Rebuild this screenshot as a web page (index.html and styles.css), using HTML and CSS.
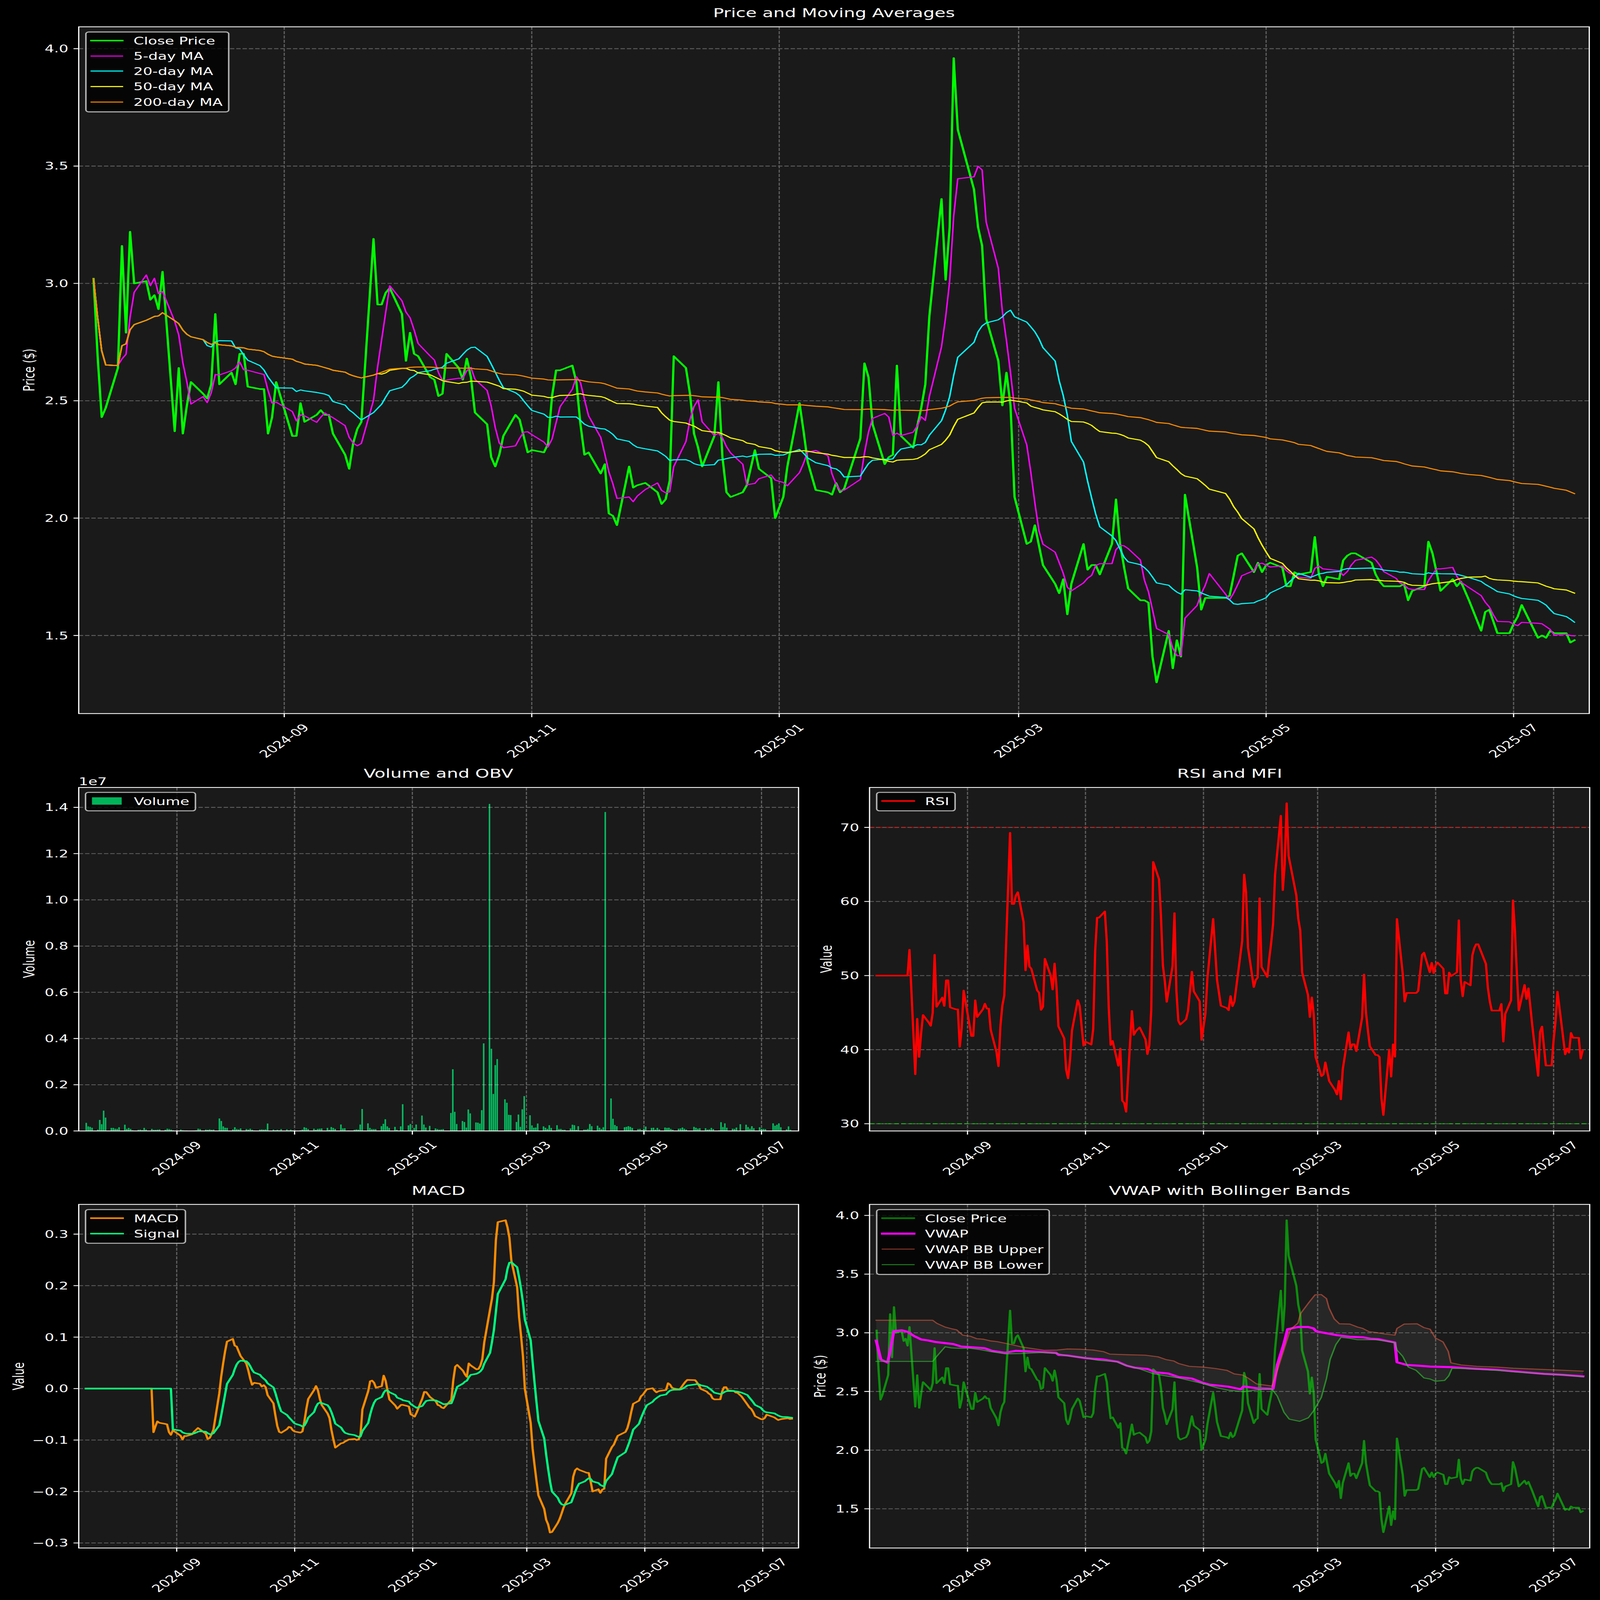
FILE: index.html
```html
<!DOCTYPE html>
<html lang="en">
<head>
<meta charset="utf-8">
<title>Price and Moving Averages</title>
<link rel="stylesheet" href="styles.css">
</head>
<body>
<main class="figure">

<svg class="chart wide" viewBox="0 0 4470 3110" preserveAspectRatio="none" role="img" aria-label="Price and Moving Averages">
  <text class="title" x="2330" y="70">Price and Moving Averages</text>
  <rect class="plot" x="220" y="109" width="4220" height="2793"/>
  <path class="grid" d="M794.1 109V2902M1485.6 109V2902M2177 109V2902M2845.8 109V2902M3537.2 109V2902M4228.6 109V2902M220 198H4440M220 675.3H4440M220 1152.6H4440M220 1629.9H4440M220 2107.2H4440M220 2584.5H4440"/>
  <polyline id="main-close" class="line lime w15"/>
  <polyline id="main-ma5" class="line magenta w10"/>
  <polyline id="main-ma20" class="line cyan w10"/>
  <polyline id="main-ma50" class="line yellow w10"/>
  <polyline id="main-ma200" class="line orange w10"/>
  <rect class="frame" x="220" y="109" width="4220" height="2793"/>
  <path class="tickmark" d="M205.4 198H220M205.4 675.3H220M205.4 1152.6H220M205.4 1629.9H220M205.4 2107.2H220M205.4 2584.5H220M794.1 2902V2916.6M1485.6 2902V2916.6M2177 2902V2916.6M2845.8 2902V2916.6M3537.2 2902V2916.6M4228.6 2902V2916.6"/>
  <g class="tick yt">
    <text x="191" y="213">4.0</text><text x="191" y="690">3.5</text><text x="191" y="1168">3.0</text><text x="191" y="1645">2.5</text><text x="191" y="2122">2.0</text><text x="191" y="2600">1.5</text>
  </g>
  <g class="tick xt">
    <text transform="translate(794.1 3013) rotate(-45)">2024-09</text>
    <text transform="translate(1485.6 3013) rotate(-45)">2024-11</text>
    <text transform="translate(2177 3013) rotate(-45)">2025-01</text>
    <text transform="translate(2845.8 3013) rotate(-45)">2025-03</text>
    <text transform="translate(3537.2 3013) rotate(-45)">2025-05</text>
    <text transform="translate(4228.6 3013) rotate(-45)">2025-07</text>
  </g>
  <text class="label" transform="translate(96 1505) rotate(-90)">Price ($)</text>
  <rect class="legend" x="240" y="130" width="399" height="325" rx="8"/>
  <path class="line lime w15" d="M255 165H342"/>
  <path class="line magenta w10" d="M255 228H342"/>
  <path class="line cyan w10" d="M255 289H342"/>
  <path class="line yellow w10" d="M255 352H342"/>
  <path class="line orange w10" d="M255 415H342"/>
  <g class="tick">
    <text x="373" y="181">Close Price</text><text x="373" y="243">5-day MA</text><text x="373" y="305">20-day MA</text><text x="373" y="367">50-day MA</text><text x="373" y="430">200-day MA</text>
  </g>
</svg>

<svg class="chart" viewBox="0 3110 2250 1705" preserveAspectRatio="none" role="img" aria-label="Volume and OBV">
  <text class="title" x="1225" y="3163">Volume and OBV</text>
  <rect class="plot" x="220" y="3202" width="2011" height="1397"/>
  <path id="volume-bars" class="bars"/>
  <path class="grid" d="M494.3 3202V4599M823 3202V4599M1152 3202V4599M1470.7 3202V4599M1799 3202V4599M2127.5 3202V4599M220 3283H2231M220 3471H2231M220 3659H2231M220 3847H2231M220 4035H2231M220 4223H2231M220 4411H2231"/>
  <rect class="frame" x="220" y="3202" width="2011" height="1397"/>
  <path class="tickmark" d="M205.4 3283H220M205.4 3471H220M205.4 3659H220M205.4 3847H220M205.4 4035H220M205.4 4223H220M205.4 4411H220M205.4 4599H220M494.3 4599V4613.6M823 4599V4613.6M1152 4599V4613.6M1470.7 4599V4613.6M1799 4599V4613.6M2127.5 4599V4613.6"/>
  <g class="tick yt">
    <text x="191" y="3298">1.4</text><text x="191" y="3486">1.2</text><text x="191" y="3674">1.0</text><text x="191" y="3862">0.8</text><text x="191" y="4050">0.6</text><text x="191" y="4238">0.4</text><text x="191" y="4426">0.2</text><text x="191" y="4614">0.0</text>
  </g>
  <g class="tick xt">
    <text transform="translate(494.3 4710) rotate(-45)">2024-09</text>
    <text transform="translate(823 4710) rotate(-45)">2024-11</text>
    <text transform="translate(1152 4710) rotate(-45)">2025-01</text>
    <text transform="translate(1470.7 4710) rotate(-45)">2025-03</text>
    <text transform="translate(1799 4710) rotate(-45)">2025-05</text>
    <text transform="translate(2127.5 4710) rotate(-45)">2025-07</text>
  </g>
  <text class="tick" x="220" y="3192">1e7</text>
  <text class="label" transform="translate(96 3900) rotate(-90)">Volume</text>
  <rect class="legend" x="239" y="3222" width="307" height="75" rx="8"/>
  <rect class="swatch" x="257" y="3242" width="83" height="30"/>
  <text class="tick" x="374" y="3273">Volume</text>
</svg>

<svg class="chart" viewBox="2250 3110 2220 1705" preserveAspectRatio="none" role="img" aria-label="RSI and MFI">
  <text class="title" x="3435" y="3163">RSI and MFI</text>
  <rect class="plot" x="2429" y="3202" width="2012" height="1397"/>
  <path class="grid" d="M2702.7 3202V4599M3032.3 3202V4599M3362 3202V4599M3680.8 3202V4599M4010.5 3202V4599M4340.1 3202V4599M2429 3364.4H4441M2429 3665.7H4441M2429 3967H4441M2429 4268.3H4441M2429 4569.6H4441"/>
  <path class="hline over" d="M2429 3364.4H4441"/>
  <path class="hline under" d="M2429 4569.6H4441"/>
  <polyline id="rsi-line" class="line red w15"/>
  <rect class="frame" x="2429" y="3202" width="2012" height="1397"/>
  <path class="tickmark" d="M2414.4 3364.4H2429M2414.4 3665.7H2429M2414.4 3967H2429M2414.4 4268.3H2429M2414.4 4569.6H2429M2702.7 4599V4613.6M3032.3 4599V4613.6M3362 4599V4613.6M3680.8 4599V4613.6M4010.5 4599V4613.6M4340.1 4599V4613.6"/>
  <g class="tick yt">
    <text x="2400" y="3380">70</text><text x="2400" y="3681">60</text><text x="2400" y="3982">50</text><text x="2400" y="4284">40</text><text x="2400" y="4585">30</text>
  </g>
  <g class="tick xt">
    <text transform="translate(2702.7 4710) rotate(-45)">2024-09</text>
    <text transform="translate(3032.3 4710) rotate(-45)">2024-11</text>
    <text transform="translate(3362 4710) rotate(-45)">2025-01</text>
    <text transform="translate(3680.8 4710) rotate(-45)">2025-03</text>
    <text transform="translate(4010.5 4710) rotate(-45)">2025-05</text>
    <text transform="translate(4340.1 4710) rotate(-45)">2025-07</text>
  </g>
  <text class="label" transform="translate(2323 3900) rotate(-90)">Value</text>
  <rect class="legend" x="2449" y="3222" width="219" height="75" rx="8"/>
  <path class="line red w15" d="M2465 3257H2553"/>
  <text class="tick" x="2584" y="3273">RSI</text>
</svg>

<svg class="chart" viewBox="0 4815 2250 1692" preserveAspectRatio="none" role="img" aria-label="MACD">
  <text class="title" x="1225" y="4859">MACD</text>
  <rect class="plot" x="220" y="4898" width="2011" height="1397.5"/>
  <path class="grid" d="M493.7 4898V6295.5M823.3 4898V6295.5M1153 4898V6295.5M1471.8 4898V6295.5M1801.5 4898V6295.5M2131 4898V6295.5M220 5019H2231M220 5228.4H2231M220 5437.7H2231M220 5647H2231M220 5856.3H2231M220 6065.6H2231M220 6274.9H2231"/>
  <polyline id="macd-line" class="line orange w15"/>
  <polyline id="macd-signal" class="line spring w15"/>
  <rect class="frame" x="220" y="4898" width="2011" height="1397.5"/>
  <path class="tickmark" d="M205.4 5019H220M205.4 5228.4H220M205.4 5437.7H220M205.4 5647H220M205.4 5856.3H220M205.4 6065.6H220M205.4 6274.9H220M493.7 6295.5V6310.1M823.3 6295.5V6310.1M1153 6295.5V6310.1M1471.8 6295.5V6310.1M1801.5 6295.5V6310.1M2131 6295.5V6310.1"/>
  <g class="tick yt">
    <text x="191" y="5034">0.3</text><text x="191" y="5244">0.2</text><text x="191" y="5453">0.1</text><text x="191" y="5662">0.0</text><text x="191" y="5871">−0.1</text><text x="191" y="6081">−0.2</text><text x="191" y="6290">−0.3</text>
  </g>
  <g class="tick xt">
    <text transform="translate(493.7 6406) rotate(-45)">2024-09</text>
    <text transform="translate(823.3 6406) rotate(-45)">2024-11</text>
    <text transform="translate(1153 6406) rotate(-45)">2025-01</text>
    <text transform="translate(1471.8 6406) rotate(-45)">2025-03</text>
    <text transform="translate(1801.5 6406) rotate(-45)">2025-05</text>
    <text transform="translate(2131 6406) rotate(-45)">2025-07</text>
  </g>
  <text class="label" transform="translate(67 5597) rotate(-90)">Value</text>
  <rect class="legend" x="239" y="4919" width="279" height="137" rx="8"/>
  <path class="line orange w15" d="M255 4954H343"/>
  <path class="line spring w15" d="M255 5017H343"/>
  <g class="tick">
    <text x="374" y="4970">MACD</text><text x="374" y="5033">Signal</text>
  </g>
</svg>

<svg class="chart" viewBox="2250 4815 2220 1692" preserveAspectRatio="none" role="img" aria-label="VWAP with Bollinger Bands">
  <text class="title" x="3435" y="4859">VWAP with Bollinger Bands</text>
  <rect class="plot" x="2429" y="4898" width="2012" height="1397.5"/>
  <path class="grid" d="M2702.7 4898V6295.5M3032.3 4898V6295.5M3362 4898V6295.5M3680.8 4898V6295.5M4010.5 4898V6295.5M4340.1 4898V6295.5M2429 4943H4441M2429 5181.6H4441M2429 5420.2H4441M2429 5658.8H4441M2429 5897.4H4441M2429 6136H4441"/>
  <polygon id="vwap-band" class="band"/>
  <polyline id="vwap-close" class="line dimgreen w15"/>
  <polyline id="vwap-line" class="line magenta w20"/>
  <polyline id="vwap-upper" class="line bb-up w10"/>
  <polyline id="vwap-lower" class="line bb-low w10"/>
  <rect class="frame" x="2429" y="4898" width="2012" height="1397.5"/>
  <path class="tickmark" d="M2414.4 4943H2429M2414.4 5181.6H2429M2414.4 5420.2H2429M2414.4 5658.8H2429M2414.4 5897.4H2429M2414.4 6136H2429M2702.7 6295.5V6310.1M3032.3 6295.5V6310.1M3362 6295.5V6310.1M3680.8 6295.5V6310.1M4010.5 6295.5V6310.1M4340.1 6295.5V6310.1"/>
  <g class="tick yt">
    <text x="2400" y="4958">4.0</text><text x="2400" y="5197">3.5</text><text x="2400" y="5435">3.0</text><text x="2400" y="5674">2.5</text><text x="2400" y="5913">2.0</text><text x="2400" y="6151">1.5</text>
  </g>
  <g class="tick xt">
    <text transform="translate(2702.7 6406) rotate(-45)">2024-09</text>
    <text transform="translate(3032.3 6406) rotate(-45)">2024-11</text>
    <text transform="translate(3362 6406) rotate(-45)">2025-01</text>
    <text transform="translate(3680.8 6406) rotate(-45)">2025-03</text>
    <text transform="translate(4010.5 6406) rotate(-45)">2025-05</text>
    <text transform="translate(4340.1 6406) rotate(-45)">2025-07</text>
  </g>
  <text class="label" transform="translate(2306 5597) rotate(-90)">Price ($)</text>
  <rect class="legend" x="2449" y="4919" width="482" height="264" rx="8"/>
  <path class="line dimgreen w15" d="M2465 4954H2553"/>
  <path class="line magenta w20" d="M2465 5017H2553"/>
  <path class="line bb-up w10" d="M2465 5080H2553"/>
  <path class="line bb-low w10" d="M2465 5143H2553"/>
  <g class="tick">
    <text x="2584" y="4970">Close Price</text><text x="2584" y="5033">VWAP</text><text x="2584" y="5096">VWAP BB Upper</text><text x="2584" y="5159">VWAP BB Lower</text>
  </g>
</svg>

</main>
<script src="script.js"></script>
</body>
</html>
```
FILE: styles.css
```css
html, body { margin: 0; padding: 0; background: #000; overflow: hidden; }
.figure {
  display: grid;
  grid-template-columns: 2250fr 2220fr;
  grid-template-rows: 3110fr 1705fr 1692fr;
  width: 100vw;
  height: 100vh;
  background: #000;
  overflow: hidden;
}
.chart { display: block; width: 100%; height: 100%; min-width: 0; min-height: 0; overflow: visible; }
.wide { grid-column: 1 / 3; }

text { font-family: "DejaVu Sans", sans-serif; fill: #fff; }
.title { font-size: 50px; text-anchor: middle; }
.tick { font-size: 41.67px; fill: #fff; }
.yt { text-anchor: end; }
.xt { text-anchor: middle; dominant-baseline: central; }
.label { font-size: 41.67px; text-anchor: middle; }

.plot { fill: #1a1a1a; }
.frame { fill: none; stroke: #fff; stroke-width: 3.33px; }
.grid { fill: none; stroke: rgba(255, 255, 255, .3); stroke-width: 3.33px; stroke-dasharray: 12.3 5.3; }
.tickmark { fill: none; stroke: #fff; stroke-width: 3.33px; }

.legend { fill: rgba(0, 0, 0, .8); stroke: #b3b3b3; stroke-width: 4.17px; }
.swatch { fill: #00ff7f; fill-opacity: .7; }
.bars { fill: #00ff7f; fill-opacity: .7; }

.line { fill: none; stroke-linejoin: round; stroke-linecap: square; }
.w10 { stroke-width: 4.17px; }
.w15 { stroke-width: 6.25px; }
.w20 { stroke-width: 8.33px; }
.lime { stroke: #00ff00; }
.magenta { stroke: #ff00ff; }
.cyan { stroke: #00ffff; }
.yellow { stroke: #ffff00; }
.orange { stroke: #ff8c00; }
.red { stroke: #ff0000; }
.spring { stroke: #00ff7f; }
.dimgreen { stroke: #00ff00; stroke-opacity: .5; }
.bb-up { stroke: #ff6347; stroke-opacity: .5; }
.bb-low { stroke: #32cd32; stroke-opacity: .6; }
.band { fill: #808080; fill-opacity: .13; stroke: none; }

.hline { fill: none; stroke-width: 4.17px; stroke-opacity: .5; stroke-dasharray: 15.4 6.7; }
.over { stroke: #ff0000; }
.under { stroke: #00ff00; }
```
FILE: script.js
```js
// [days since 2024-07-16, close, volume in millions]
var DAYS = [
[0,3.02,.35],[1,2.69,.2],[2,2.43,.18],[3,2.47,.14],[6,2.64,.06],[7,3.16,.48],[8,2.79,.29],[9,3.22,.88],[10,3.00,.58],
[13,3.01,.13],[14,2.93,.13],[15,2.95,.1],[16,2.89,.09],[17,3.05,.16],[20,2.37,.27],[21,2.64,.09],[22,2.36,.13],[23,2.48,.09],[24,2.58,.03],
[27,2.53,.05],[28,2.51,.06],[29,2.57,.04],[30,2.87,.13],[31,2.57,.06],[34,2.62,.09],[35,2.57,.05],[36,2.70,.05],[37,2.70,.06],[38,2.56,.07],
[41,2.55,.05],[42,2.55,.1],[43,2.36,.08],[44,2.43,.06],[45,2.58,.03],[49,2.35,.06],[50,2.35,.03],[51,2.49,.02],[52,2.41,.02],
[55,2.44,.01],[56,2.46,.02],[57,2.44,.03],[58,2.44,.1],[59,2.36,.08],[62,2.27,.06],[63,2.21,.05],[64,2.32,.07],[65,2.38,.05],[66,2.41,.06],
[69,3.19,.54],[70,2.91,.43],[71,2.91,.2],[72,2.96,.14],[73,2.98,.13],[76,2.87,.07],[77,2.67,.16],[78,2.79,.08],[79,2.70,.07],[80,2.69,.11],
[83,2.60,.08],[84,2.59,.06],[85,2.52,.1],[86,2.53,.05],[87,2.70,.02],[90,2.64,.06],[91,2.59,.07],[92,2.68,.06],[93,2.60,.07],[94,2.45,.32],
[97,2.40,.06],[98,2.26,.03],[99,2.22,.05],[100,2.27,.03],[101,2.35,.08],[104,2.44,.07],[105,2.42,.03],[106,2.35,.06],[107,2.28,.03],[108,2.29,.02],
[111,2.28,.03],[112,2.315,.06],[113,2.52,.16],[114,2.63,.13],[115,2.63,.08],[118,2.65,.1],[119,2.58,.05],[120,2.40,.09],[121,2.27,.1],[122,2.28,.11],
[125,2.19,.13],[126,2.23,.05],[127,2.02,.17],[128,2.01,.13],[129,1.97,.09],[132,2.22,.28],[133,2.13,.11],[134,2.14,.12],[136,2.15,.02],
[139,2.11,.05],[140,2.06,.07],[141,2.08,.06],[142,2.16,.28],[143,2.69,.95],[146,2.64,.33],[147,2.53,.13],[148,2.36,.08],[149,2.30,.08],[150,2.22,.08],
[153,2.35,.21],[154,2.58,.31],[155,2.26,.51],[156,2.11,.2],[157,2.09,.13],[160,2.11,.18],[161,2.14,.05],[163,2.29,.2],[164,2.21,1.16],
[167,2.17,.24],[168,2.00,.3],[170,2.09,.13],[171,2.22,.28],[174,2.49,.67],[175,2.37,.28],[176,2.24,.15],[178,2.12,.22],
[181,2.11,.11],[182,2.10,.08],[183,2.15,.06],[184,2.11,.07],[185,2.125,.08],[189,2.34,.78],[190,2.66,2.67],[191,2.60,.83],[192,2.40,.3],
[195,2.23,.43],[196,2.26,.39],[197,2.27,.15],[198,2.65,.93],[199,2.35,.76],[202,2.30,.37],[203,2.39,.36],[204,2.47,.32],[205,2.57,.9],[206,2.86,3.79],
[209,3.36,14.15],[210,3.015,3.56],[211,3.24,1.6],[212,3.96,2.85],[213,3.656,3.11],[217,3.40,1.37],[218,3.24,1.22],[219,3.16,.7],[220,2.85,.69],
[223,2.67,.39],[224,2.48,.71],[225,2.62,.18],[226,2.48,.94],[227,2.09,1.51],[230,1.89,.68],[231,1.90,.24],[232,1.97,.14],[233,1.884,.15],[234,1.80,.32],
[237,1.72,.2],[238,1.68,.14],[239,1.74,.09],[240,1.59,.25],[241,1.72,.13],[244,1.89,.25],[245,1.78,.08],[246,1.80,.09],[247,1.80,.05],[248,1.76,.05],
[251,1.89,.11],[252,2.08,.27],[253,1.89,.25],[254,1.79,.05],[255,1.70,.21],[258,1.65,.06],[259,1.65,.06],[260,1.64,.09],[261,1.41,.3],[262,1.30,.21],
[265,1.52,.23],[266,1.36,.14],[267,1.48,.08],[268,1.41,.16],[269,2.10,13.8],[272,1.79,1.41],[273,1.61,.53],[274,1.66,.26],[275,1.66,.21],
[279,1.66,.16],[280,1.67,.18],[281,1.754,.21],[282,1.84,.18],[283,1.85,.13],[286,1.77,.08],[287,1.81,.09],[288,1.77,.04],[289,1.80,.1],[290,1.81,.19],
[293,1.79,.13],[294,1.71,.14],[295,1.71,.06],[296,1.77,.13],[297,1.76,.07],[300,1.77,.15],[301,1.92,.13],[302,1.76,.14],[303,1.71,.09],[304,1.75,.05],
[307,1.74,.1],[308,1.82,.11],[309,1.84,.15],[310,1.85,.1],[311,1.85,.06],[315,1.81,.18],[316,1.76,.14],[317,1.73,.1],[318,1.71,.12],
[321,1.71,.12],[322,1.71,.06],[323,1.72,.07],[324,1.65,.13],[325,1.69,.08],[328,1.71,.03],[329,1.90,.38],[330,1.85,.17],[331,1.77,.33],[332,1.69,.14],
[335,1.74,.1],[336,1.71,.09],[337,1.73,.15],[339,1.65,.29],[342,1.52,.27],[343,1.60,.17],[344,1.61,.1],[345,1.56,.21],[346,1.51,.12],
[349,1.51,.16],[350,1.55,.09],[351,1.58,.09],[352,1.63,.08],[356,1.49,.33],[357,1.50,.23],[358,1.49,.27],[359,1.52,.33],[360,1.51,.16],
[363,1.51,.07],[364,1.47,.2],[365,1.48,.05]
];

var BB_UPPER = [[171,535],[280,535],[288,546],[304,560],[316,566],[326,570],[338,590],[353,594],[365,603],[378,605],[391,611],[405,614],[420,620],[435,626],[450,633],[475,640],[495,646],[520,645],[540,641],[565,642],[590,645],[610,651],[622,660],[650,662],[690,664],[715,670],[730,680],[745,685],[755,695],[775,705],[803,708],[825,713],[848,720],[862,733],[878,737],[890,750],[905,770],[935,778],[945,720],[955,660],[970,570],[985,545],[990,510],[1005,472],[1018,441],[1030,440],[1040,455],[1045,490],[1055,530],[1065,548],[1085,549],[1100,560],[1110,565],[1122,577],[1135,580],[1150,585],[1172,590],[1176,565],[1190,549],[1215,548],[1228,562],[1240,568],[1250,600],[1265,615],[1275,650],[1280,692],[1300,700],[1330,705],[1370,708],[1400,712],[1450,716],[1500,720],[1535,723]];
var BB_LOWER = [[171,687],[280,687],[288,668],[304,633],[316,637],[335,639],[350,638],[370,643],[390,650],[420,659],[450,658],[490,654],[520,658],[540,666],[570,673],[600,683],[635,688],[650,700],[680,715],[705,732],[735,742],[755,748],[800,768],[830,785],[850,793],[880,799],[910,791],[935,790],[945,815],[958,875],[968,900],[988,908],[1005,895],[1015,870],[1030,820],[1040,750],[1047,680],[1058,625],[1068,598],[1085,602],[1100,607],[1135,607],[1155,612],[1172,618],[1176,645],[1187,668],[1198,708],[1213,720],[1228,748],[1240,752],[1250,760],[1268,757],[1276,740],[1282,713],[1300,713],[1370,720],[1400,725],[1450,732],[1500,737],[1535,744]];
var VWAP = [[171,610],[180,680],[193,691],[198,650],[205,575],[220,572],[232,578],[244,593],[258,606],[270,609],[285,615],[320,623],[335,632],[380,638],[395,648],[420,655],[440,648],[480,651],[518,655],[523,663],[540,665],[575,675],[610,680],[637,688],[655,703],[670,710],[695,715],[710,727],[735,732],[755,745],[780,750],[800,765],[815,773],[850,780],[875,790],[880,779],[905,786],[937,788],[945,700],[958,620],[965,568],[985,560],[1005,560],[1015,565],[1020,576],[1040,583],[1060,590],[1085,596],[1110,598],[1125,603],[1140,605],[1172,617],[1176,690],[1195,700],[1220,703],[1240,706],[1280,708],[1320,713],[1370,718],[1405,724],[1460,733],[1490,736],[1535,742]];

var close = DAYS.map(function (r) { return r[1]; });

function rolling(values, n) {
  return values.map(function (_, i) {
    var from = Math.max(0, i - n + 1), sum = 0;
    for (var j = from; j <= i; j++) sum += values[j];
    return sum / (i - from + 1);
  });
}
function ema(values, span) {
  var a = 2 / (span + 1), out = [], prev = null;
  values.forEach(function (v) {
    if (v === null) { out.push(null); return; }
    prev = prev === null ? v : a * v + (1 - a) * prev;
    out.push(prev);
  });
  return out;
}
function rsi(values) {
  var g = 0, l = 0;
  return values.map(function (v, i) {
    if (i > 0) {
      var d = v - values[i - 1];
      g = g * 13 / 14 + Math.max(d, 0) / 14;
      l = l * 13 / 14 + Math.max(-d, 0) / 14;
    }
    return i < 13 ? 50 : 100 - 100 / (1 + g / l);
  });
}
function draw(id, xOf, yOf, values) {
  var pts = values.map(function (v, i) {
    return xOf(DAYS[i][0]).toFixed(1) + "," + yOf(v).toFixed(1);
  });
  document.getElementById(id).setAttribute("points", pts.join(" "));
}
function zoomPts(list) {
  return list.map(function (p) {
    return (2200 + p[0] * 1.4477).toFixed(1) + "," + (4780 + p[1] * 1.1014).toFixed(1);
  });
}

var mainX = function (d) { return 261.4 + d * 11.335; };
var mainY = function (p) { return 198 + (4 - p) * 954.6; };
draw("main-close", mainX, mainY, close);
draw("main-ma5", mainX, mainY, rolling(close, 5));
draw("main-ma20", mainX, mainY, rolling(close, 20));
draw("main-ma50", mainX, mainY, rolling(close, 50));
draw("main-ma200", mainX, mainY, rolling(close, 200));

var barPath = DAYS.map(function (r) {
  var x = 241 + r[0] * 5.39 - 2.15, top = 4599 - r[2] * 94;
  return "M" + x.toFixed(1) + " " + top.toFixed(1) + "h4.3V4599h-4.3Z";
}).join("");
document.getElementById("volume-bars").setAttribute("d", barPath);

var rightX = function (d) { return 2448.7 + d * 5.404; };
draw("rsi-line", rightX, function (v) { return 3967 - (v - 50) * 30.13; }, rsi(close));

var fast = ema(close, 12), slow = ema(close, 26);
var macd = close.map(function (_, i) { return i < 25 ? null : fast[i] - slow[i]; });
var sig = ema(macd, 9).map(function (v, i) { return i < 33 ? 0 : v; });
var leftX = function (d) { return 239.7 + d * 5.404; };
var macdY = function (v) { return 5647 - v * 2093; };
draw("macd-line", leftX, macdY, macd.map(function (v) { return v === null ? 0 : v; }));
draw("macd-signal", leftX, macdY, sig);

draw("vwap-close", rightX, function (p) { return 5420.2 - (p - 3) * 477.2; }, close);
document.getElementById("vwap-line").setAttribute("points", zoomPts(VWAP).join(" "));
document.getElementById("vwap-upper").setAttribute("points", zoomPts(BB_UPPER).join(" "));
document.getElementById("vwap-lower").setAttribute("points", zoomPts(BB_LOWER).join(" "));
document.getElementById("vwap-band").setAttribute("points", zoomPts(BB_UPPER).concat(zoomPts(BB_LOWER).reverse()).join(" "));
```
